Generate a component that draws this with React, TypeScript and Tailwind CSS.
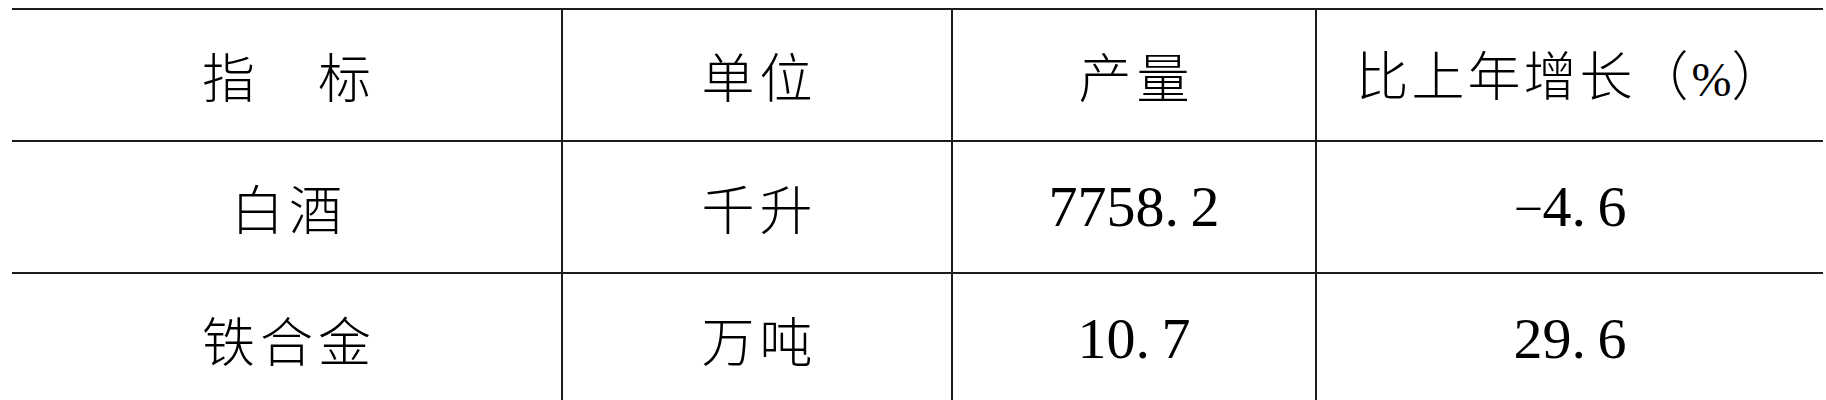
import React from "react";

const cjk = "font-['Noto_Sans_CJK_SC',sans-serif] text-[53px] tracking-[5px] pl-[5px] font-light leading-none text-black";
const num = "font-['Liberation_Serif',serif] text-[58px] leading-none text-black";

function Cell({ children, first }: { children: React.ReactNode; first?: boolean }) {
  return (
    <div
      className={
        "h-[132px] border-t-2 border-[#1c1c1c] flex items-center justify-center " +
        (first ? "" : "border-l-2")
      }
    >
      {children}
    </div>
  );
}

function Num({ value }: { value: string }) {
  const parts = value.split("");
  return (
    <span className={num}>
      {parts.map((ch, i) =>
        ch === "." ? (
          <span key={i} className="inline-block w-[26px]">.</span>
        ) : ch === "-" ? (
          <span key={i} className="inline-block w-[29px] text-center -translate-y-[1px] scale-x-[1.6] scale-y-[0.55]">-</span>
        ) : (
          <span key={i}>{ch}</span>
        )
      )}
    </span>
  );
}

export default function App() {
  return (
    <div className="bg-white w-[1826px] h-[400px] overflow-hidden pt-[8px] pl-[12px]">
      <div className="grid grid-cols-[549px_390px_364px_508px]">
        <Cell first>
          <span className={cjk}>指　标</span>
        </Cell>
        <Cell>
          <span className={cjk}>单位</span>
        </Cell>
        <Cell>
          <span className={cjk}>产量</span>
        </Cell>
        <Cell>
          <span className="leading-none text-black">
            <span className="font-['Noto_Sans_CJK_SC',sans-serif] text-[53px] tracking-[3px] font-light leading-none">比上年增长（</span>
            <span className="font-['Liberation_Serif',serif] text-[48px] leading-none">%</span>
            <span className="font-['Noto_Sans_CJK_SC',sans-serif] text-[53px] font-light leading-none">）</span>
          </span>
        </Cell>

        <Cell first>
          <span className={cjk}>白酒</span>
        </Cell>
        <Cell>
          <span className={cjk}>千升</span>
        </Cell>
        <Cell>
          <Num value="7758.2" />
        </Cell>
        <Cell>
          <Num value="-4.6" />
        </Cell>

        <Cell first>
          <span className={cjk}>铁合金</span>
        </Cell>
        <Cell>
          <span className={cjk}>万吨</span>
        </Cell>
        <Cell>
          <Num value="10.7" />
        </Cell>
        <Cell>
          <Num value="29.6" />
        </Cell>
      </div>
    </div>
  );
}
